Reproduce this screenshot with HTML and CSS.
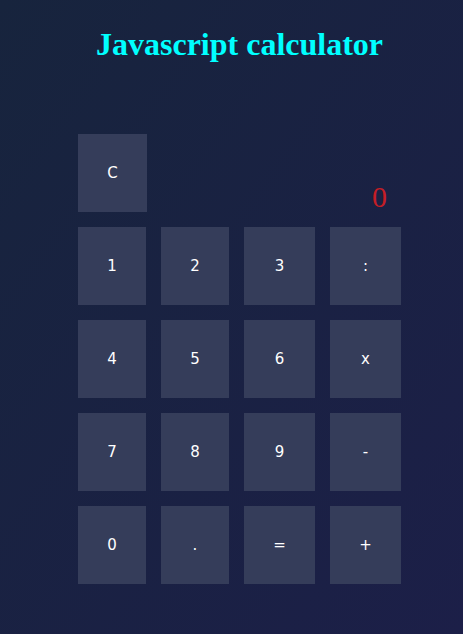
FILE: index.html
```html
<!DOCTYPE html>
<html>
<head>
<meta charset="utf-8">
<link rel="stylesheet" href="styles.css">
</head>
<body>
<h1 class="title">Javascript calculator</h1>
<div class="calc">
  <button class="key key-c">C</button>
  <div class="display">0</div>
  <button class="key">1</button>
  <button class="key">2</button>
  <button class="key">3</button>
  <button class="key">:</button>
  <button class="key">4</button>
  <button class="key">5</button>
  <button class="key">6</button>
  <button class="key">x</button>
  <button class="key">7</button>
  <button class="key">8</button>
  <button class="key">9</button>
  <button class="key">-</button>
  <button class="key">0</button>
  <button class="key">.</button>
  <button class="key">=</button>
  <button class="key">+</button>
</div>
</body>
</html>
```
FILE: styles.css
```css
html, body {
  margin: 0;
  height: 100%;
}
body {
  background: linear-gradient(to bottom right, #17243d, #1c1f48);
  font-family: "DejaVu Sans", sans-serif;
}
.title {
  margin: 0;
  padding: 26px 0 0 16px;
  text-align: center;
  font-family: "Liberation Serif", serif;
  font-weight: bold;
  font-size: 32px;
  color: #00ffff;
}
.calc {
  margin: 71px 0 0 78px;
  display: grid;
  grid-template-columns: 68px 68px 71px 71px;
  grid-auto-rows: 78px;
  column-gap: 15px;
  row-gap: 15px;
}
.key {
  border: none;
  margin: 0;
  padding: 0;
  background: #353d5a;
  color: #ffffff;
  font-family: "DejaVu Sans", sans-serif;
  font-size: 15px;
}
.key-c {
  width: 69px;
}
.display {
  grid-column: 2 / span 3;
  align-self: end;
  text-align: right;
  padding-right: 14px;
  font-family: "Liberation Serif", serif;
  font-size: 30px;
  color: #c41e26;
  line-height: 1;
}
```
